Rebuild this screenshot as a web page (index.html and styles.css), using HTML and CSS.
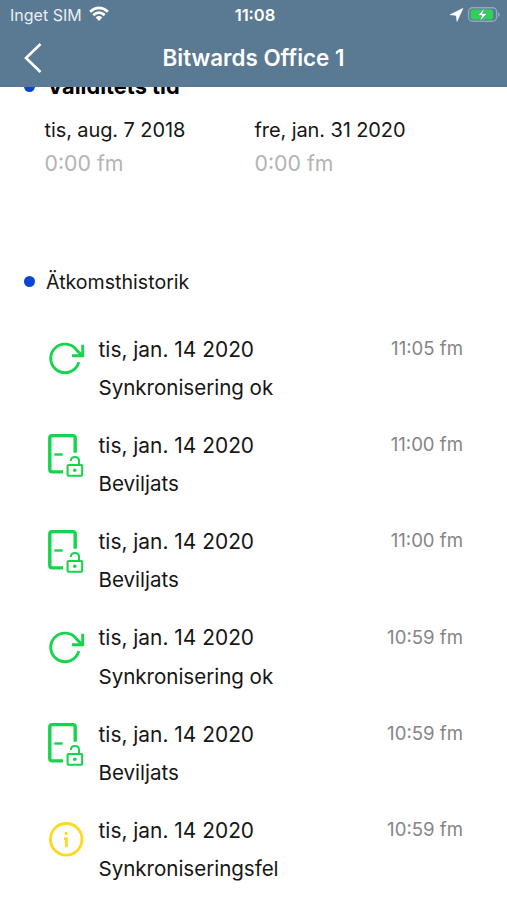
FILE: index.html
```html
<!DOCTYPE html>
<html lang="sv">
<head>
<meta charset="utf-8">
<title>Bitwards Office 1</title>
<link rel="stylesheet" href="styles.css">
</head>
<body>
<svg class="defs" aria-hidden="true">
  <symbol id="sync" viewBox="0 0 58 60"><path d="M38.8 32.2A14.3 14.3 0 1 1 37 20.6L42.2 25.6M42.7 14.8V25.7H32" fill="none" stroke="currentColor" stroke-width="2.9"/></symbol>
  <symbol id="door" viewBox="0 1.2 58 60"><path d="M35.2 28V13.2Q35.2 10.8 32.8 10.8H12.2Q9.8 10.8 9.8 13.2V44.8Q9.8 47.1 12.2 47.1H23" fill="none" stroke="currentColor" stroke-width="3.4"/><path d="M14.3 29.7H22.7" stroke="currentColor" stroke-width="2.4"/><rect x="27.6" y="40.2" width="14.6" height="10.8" rx="1" fill="none" stroke="currentColor" stroke-width="2.1"/><path d="M30.8 36.2C31 31 39 31 39 36.3V40" fill="none" stroke="currentColor" stroke-width="2"/><circle cx="34.8" cy="45.4" r="1.8" fill="currentColor"/></symbol>
  <symbol id="info" viewBox="0 1 58 60"><circle cx="26.2" cy="29.3" r="15.8" fill="none" stroke="currentColor" stroke-width="2.8"/><circle cx="26.2" cy="23.4" r="1.6" fill="currentColor"/><path d="M24 28.7H26.4V37.2" fill="none" stroke="currentColor" stroke-width="2.7"/></symbol>
</svg>
<header class="top">
  <div class="status">
    <div class="carrier"><span>Inget SIM</span>
      <svg class="wifi" viewBox="0 0 21 16"><g fill="none" stroke="#fff" stroke-width="2.9"><path d="M1.2 5.6Q10.5-2.4 19.8 5.6M4.5 9.2Q10.5 4 16.5 9.2"/></g><path d="M7 11.6Q10.5 8.7 14 11.6L10.5 15.3Z" fill="#fff"/></svg>
    </div>
    <span class="clock">11:08</span>
    <div class="power">
      <svg width="50" height="18" viewBox="0 0 50 18"><path d="M13 2.3L0 8.7 6.2 9.4 7 15.5Z" fill="#fff" stroke="#fff" stroke-width=".5" stroke-linejoin="round"/><rect x="18.6" y="1.7" width="28" height="13.6" rx="4" fill="none" stroke="#91a8b9" stroke-width="1.4"/><rect x="20.6" y="3.6" width="22.5" height="9.8" rx="2.2" fill="#30d158"/><path d="M48 6V11Q49.7 10 49.7 8.5T48 6" fill="#91a8b9"/><path d="M34.6 1.8L28 9.5H32L29.6 15.6 37 7.5H32.6Z" fill="#fff" stroke="#5a7992" stroke-width=".5"/></svg>
    </div>
  </div>
  <div class="nav">
    <svg class="back" viewBox="0 0 18 30"><path d="M16.5 1L2 15 16.5 29" fill="none" stroke="#fff" stroke-width="2.6"/></svg>
    <h1>Bitwards Office 1</h1>
  </div>
</header>
<main>
  <div class="valid"><i class="dot"></i><h2>Validitets tid</h2></div>
  <section class="dates">
    <div><p class="day">tis, aug. 7 2018</p><p class="muted">0:00 fm</p></div>
    <div><p class="day">fre, jan. 31 2020</p><p class="muted">0:00 fm</p></div>
  </section>
  <div class="history"><i class="dot"></i><h3>Ätkomsthistorik</h3></div>
  <ul>
    <li><svg class="icon green"><use href="#sync"/></svg><div class="entry"><p class="date">tis, jan. 14 2020</p><p class="event">Synkronisering ok</p></div><time>11:05 fm</time></li>
    <li><svg class="icon green"><use href="#door"/></svg><div class="entry"><p class="date">tis, jan. 14 2020</p><p class="event">Beviljats</p></div><time>11:00 fm</time></li>
    <li><svg class="icon green"><use href="#door"/></svg><div class="entry"><p class="date">tis, jan. 14 2020</p><p class="event">Beviljats</p></div><time>11:00 fm</time></li>
    <li><svg class="icon green"><use href="#sync"/></svg><div class="entry"><p class="date">tis, jan. 14 2020</p><p class="event">Synkronisering ok</p></div><time>10:59 fm</time></li>
    <li><svg class="icon green"><use href="#door"/></svg><div class="entry"><p class="date">tis, jan. 14 2020</p><p class="event">Beviljats</p></div><time>10:59 fm</time></li>
    <li><svg class="icon yellow"><use href="#info"/></svg><div class="entry"><p class="date">tis, jan. 14 2020</p><p class="event">Synkroniseringsfel</p></div><time>10:59 fm</time></li>
  </ul>
</main>
</body>
</html>
```
FILE: styles.css
```css
* { box-sizing: border-box; margin: 0; padding: 0; }
body { width: 507px; height: 900px; overflow: hidden; background: #fff; color: #161616; font: 20px/38px Inter, sans-serif; white-space: nowrap; display: flex; flex-direction: column; }
.defs { display: none; }
.top { height: 87px; flex: none; background: #5a7992; color: #fff; }
.status { height: 30px; display: grid; grid-template-columns: 1fr auto 1fr; align-items: center; padding: 0 7px 0 10px; font-size: 16px; line-height: 30px; }
.carrier { display: flex; align-items: center; gap: 7px; color: #e8eef2; }
.wifi { width: 20px; height: 16px; margin-top: -2px; }
.clock { font-weight: 600; font-size: 16.5px; }
.power { display: flex; justify-content: flex-end; }
.nav { height: 57px; display: grid; grid-template-columns: 60px 1fr 60px; align-items: center; padding-bottom: 1px; }
.back { width: 18px; height: 30px; margin-left: 24px; }
h1 { text-align: center; font-size: 22.4px; font-weight: 600; }
.valid { height: 23px; flex: none; display: flex; align-items: flex-start; padding-left: 24px; overflow: hidden; }
.valid .dot { margin: -6px 12px 0 0; }
h2 { color: #000; font-size: 21.8px; line-height: 26px; margin-top: -14px; font-weight: 700; }
.dot { width: 11px; height: 11px; border-radius: 50%; background: #0845d4; flex: none; }
main { flex: 1; min-height: 0; overflow: hidden; }
.dates { display: grid; grid-template-columns: 210px 1fr; padding: 3px 0 0 44.5px; height: 152px; line-height: 34px; }
.day { letter-spacing: -.1px; }
.muted { color: #b4b4b4; font-size: 21.3px; line-height: 33px; }
.history { display: flex; align-items: center; height: 38px; padding: 1px 0 0 24px; gap: 11px; }
h3 { font-size: 19.6px; font-weight: 400; }
ul { list-style: none; padding-top: 30px; }
li { display: grid; grid-template-columns: 58.5px 1fr auto; height: 96.2px; padding: 0 44px 0 40px; }
.icon { width: 58px; height: 60px; }
.green { color: #16d44c; }
.yellow { color: #fbd91b; }
.entry { padding-top: .8px; line-height: 38.2px; }
.date { font-size: 20.9px; }
.event { font-size: 20.6px; letter-spacing: -.04px; }
time { font-size: 18.6px; color: #858585; line-height: 36.5px; }
```
